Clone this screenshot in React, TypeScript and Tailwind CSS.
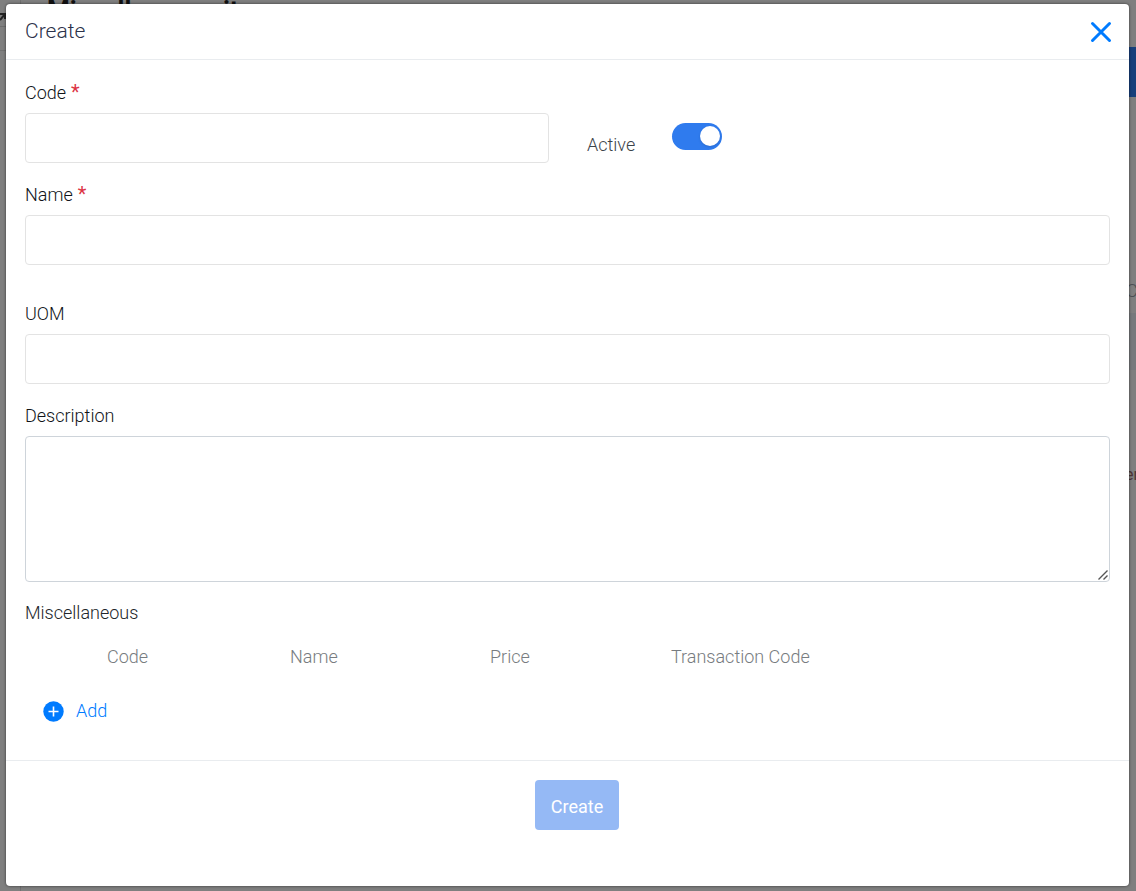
import React, { useState } from 'react';

const columns = [
  { title: 'Code', width: 'w-[183px]' },
  { title: 'Name', width: 'w-[200px]' },
  { title: 'Price', width: 'w-[181px]' },
  { title: 'Transaction Code', width: '' },
];

const Label = ({ htmlFor, children, required = false }: { htmlFor: string; children: React.ReactNode; required?: boolean }) => (
  <label htmlFor={htmlFor} className="mb-2 block leading-6 text-[#101418]">
    {children}
    {required && <span className="text-xl leading-5 font-normal text-[#dc3545]"> *</span>}
  </label>
);

const TextField = ({ id, label, required = false }: { id: string; label: string; required?: boolean }) => (
  <div>
    <Label htmlFor={id} required={required}>{label}</Label>
    <input id={id} type="text" className="block h-[50px] w-full rounded border border-[#e3e3e3] bg-white px-3 outline-none" />
  </div>
);

// Page that stays visible around the edges of the dialog
const Backdrop = () => (
  <div className="absolute inset-0 overflow-hidden bg-[#7f7f7f]" aria-hidden="true">
    <div className="flex h-full">
      <div className="w-[21px] shrink-0 border-r border-[#707070]">
        <div className="flex h-[27px] items-center border-b border-[#6d6d6d]">
          <svg viewBox="0 0 6 8" className="mt-2 h-2 w-1.5" fill="none" stroke="#222" strokeWidth="2">
            <path d="M0 1h5v5M0 7l5-6" />
          </svg>
        </div>
        <div className="h-6 border-b border-[#717171]" />
      </div>
      <div className="grow">
        <h1 className="-mt-1 pl-[26px] text-[26px] leading-7 font-bold text-[#111]">Miscellaneous items</h1>
      </div>
    </div>
    <div className="absolute top-[47px] right-0 h-[50px] w-10 bg-[#173f7b]" />
    <div className="absolute top-[313px] right-0 h-[57px] w-10 bg-[#76797c]" />
    <span className="absolute top-[279px] left-full -ml-2.5 leading-6 text-[#4b4e52]">C</span>
    <span className="absolute top-[463px] left-full -ml-[11px] text-base leading-6 font-normal text-[#4d3535]">er</span>
  </div>
);

const CreateDialog = () => {
  const [active, setActive] = useState(true);

  return (
    <div role="dialog" aria-labelledby="dialog-title" className="flex grow flex-col rounded bg-white shadow-[0_0_3px_rgba(0,0,0,0.6)]">
      <header className="flex h-14 items-center justify-between border-b border-[#e9ecef] px-[19px]">
        <h2 id="dialog-title" className="text-[21px] font-light text-[#2c324a]">Create</h2>
        <button type="button" aria-label="Close" className="-mr-[3px]">
          <svg viewBox="0 0 24 24" className="size-6" fill="none" stroke="#007bff" strokeWidth="3" strokeLinecap="round">
            <path d="M3.5 3.5l17 17M20.5 3.5l-17 17" />
          </svg>
        </button>
      </header>

      <form className="px-[19px] pt-[21px] pb-[37px]">
        <div className="flex">
          <div className="w-[524px]">
            <TextField id="code" label="Code" required />
          </div>
          <div className="ml-[38px] flex items-center pt-7">
            <label htmlFor="active" className="mt-4 w-[85px] text-[#3c434a]">Active</label>
            <input
              id="active"
              type="checkbox"
              role="switch"
              checked={active}
              onChange={(e) => setActive(e.target.checked)}
              className="h-[27px] w-[50px] appearance-none rounded-full bg-gray-300 p-[3px] before:block before:size-5 before:rounded-full before:bg-white before:shadow checked:bg-[#2f7bee] checked:before:ml-[25px]"
            />
          </div>
        </div>
        <div className="mt-5">
          <TextField id="name" label="Name" required />
        </div>
        <div className="mt-[37px]">
          <TextField id="uom" label="UOM" />
        </div>
        <div className="mt-5">
          <Label htmlFor="description">Description</Label>
          <div className="relative">
            <textarea
              id="description"
              className="block h-[146px] w-full rounded border border-[#ced4da] bg-white px-3 py-2 outline-none [&::-webkit-resizer]:bg-transparent"
            />
            <svg viewBox="0 0 10 10" className="pointer-events-none absolute right-0.5 bottom-0.5 size-2.5" fill="none" stroke="#555" strokeWidth="1.4">
              <path d="M0.5 9.5l9-9M5.5 9.5l4-4" />
            </svg>
          </div>
        </div>

        <h3 className="mt-[19px] leading-6 text-[#212529]">Miscellaneous</h3>
        <table className="mt-5 w-full table-fixed text-left">
          <thead>
            <tr>
              <td className="w-[82px] p-0" />
              {columns.map((column) => (
                <th key={column.title} scope="col" className={`p-0 leading-6 font-light text-[#777c80] ${column.width}`}>
                  {column.title}
                </th>
              ))}
            </tr>
          </thead>
        </table>
        <button type="button" className="mt-[30px] ml-[18px] flex items-center gap-3 leading-6 text-[#007bff]">
          <svg viewBox="0 0 21 21" className="size-[21px]">
            <circle cx="10.5" cy="10.5" r="10.2" fill="#007bff" />
            <path d="M10.5 5.5v10M5.5 10.5h10" stroke="#fff" strokeWidth="1.6" />
          </svg>
          Add
        </button>
      </form>

      <footer className="flex justify-center border-t border-[#e9ecef] pt-[19px] pb-14 pl-[19px]">
        <button type="submit" className="h-[50px] w-[84px] rounded bg-[#95b9f5] pt-0.5 font-normal text-white">Create</button>
      </footer>
    </div>
  );
};

export default function App() {
  return (
    <div className="relative flex min-h-screen overflow-hidden pt-1 pr-[7px] pb-[5px] pl-1.5 font-['Roboto',sans-serif] text-[18px] font-light">
      <Backdrop />
      <main className="relative flex grow">
        <CreateDialog />
      </main>
    </div>
  );
}
